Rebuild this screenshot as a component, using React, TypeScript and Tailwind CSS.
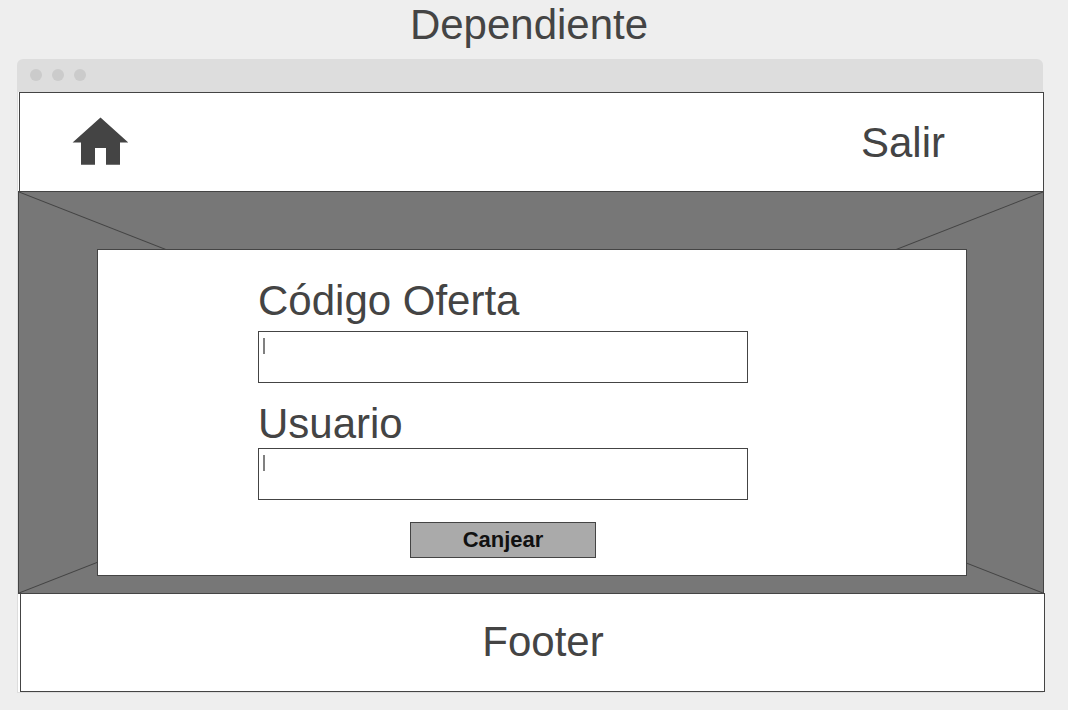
import React from "react";

function TitleBar() {
  return (
    <div className="flex h-[33px] items-center gap-[10px] rounded-t-md bg-[#dddddd] px-[13px] pb-[2px]">
      <span className="size-3 rounded-full bg-[#cbcbcb]" />
      <span className="size-3 rounded-full bg-[#cbcbcb]" />
      <span className="size-3 rounded-full bg-[#cbcbcb]" />
    </div>
  );
}

function HomeIcon() {
  return (
    <svg className="block h-12 w-14" viewBox="0 0 56 48" fill="#444444" aria-hidden="true">
      <path d="M28.5 0.5L56.2 25.5H48V47.8H34V31H23V47.8H9V25.5H0.6Z" />
    </svg>
  );
}

function Field({ id, label, className }: { id: string; label: string; className: string }) {
  return (
    <div className={"flex flex-col " + className}>
      <label htmlFor={id} className="text-[42px] leading-[48px]">
        {label}
      </label>
      <div className="relative">
        <input
          id={id}
          type="text"
          className="peer block h-[52px] w-full border border-[#444444] bg-white px-1 text-base text-[#444444] outline-none"
        />
        <span className="pointer-events-none absolute top-[7px] left-[5px] h-4 w-[2px] bg-[#808080] peer-focus:hidden" />
      </div>
    </div>
  );
}

export default function App() {
  return (
    <div className="min-h-screen bg-[#eeeeee] pr-[25px] pb-4 pl-[17px] font-['Liberation_Sans',Arial,sans-serif] text-[#444444]">
      <h1 className="pt-px pr-[2px] pb-[10px] text-center text-[42px] leading-[48px]">Dependiente</h1>
      <div>
        <TitleBar />
        <div className="border-b border-l border-[#dddddd] bg-white">
          <header className="-mr-px ml-px flex h-[99px] items-start justify-between border border-b-0 border-[#444444] bg-white pt-6 pr-[98px] pl-[52px]">
            <a href="#inicio" aria-label="Inicio">
              <HomeIcon />
            </a>
            <a href="#salir" className="text-[42px] leading-[52px]">
              Salir
            </a>
          </header>
          <main className="relative -mr-px border border-[#444444] bg-[#777777] pt-[57px] pr-[76px] pb-[17px] pl-[78px]">
            <svg
              className="absolute inset-0 size-full"
              viewBox="0 0 100 100"
              preserveAspectRatio="none"
              stroke="#444444"
              aria-hidden="true"
            >
              <path d="M0 0L100 100M100 0L0 100" vectorEffect="non-scaling-stroke" />
            </svg>
            <form
              className="relative border border-[#444444] bg-white pt-[27px] pr-[218px] pb-[17px] pl-[160px]"
              onSubmit={(e) => e.preventDefault()}
            >
              <Field id="codigo" label="Código Oferta" className="gap-[6px]" />
              <Field id="usuario" label="Usuario" className="mt-[17px]" />
              <button
                type="submit"
                className="mx-auto mt-[22px] block h-9 w-[186px] border border-[#444444] bg-[#aaaaaa] text-[22px] leading-[32px] font-bold text-[#111111]"
              >
                Canjear
              </button>
            </form>
          </main>
          <footer className="-mt-px -mr-[2px] ml-[2px] flex h-[99px] items-center justify-center border border-[#444444] bg-white pb-[2px] pl-[21px] text-[42px] leading-[48px]">
            Footer
          </footer>
        </div>
      </div>
    </div>
  );
}
